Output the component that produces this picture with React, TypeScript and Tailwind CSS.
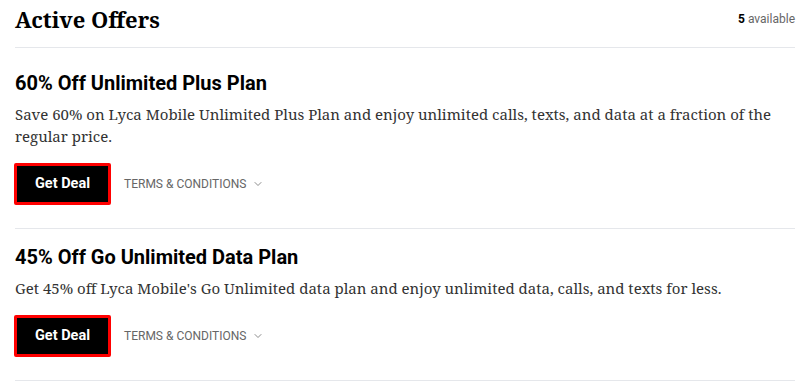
import { ChevronDown } from 'lucide-react';

interface Offer {
  id: number;
  title: string;
  description: string;
}

const offers: Offer[] = [
  {
    id: 1,
    title: '60% Off Unlimited Plus Plan',
    description:
      'Save 60% on Lyca Mobile Unlimited Plus Plan and enjoy unlimited calls, texts, and data at a fraction of the regular price.',
  },
  {
    id: 2,
    title: '45% Off Go Unlimited Data Plan',
    description:
      "Get 45% off Lyca Mobile's Go Unlimited data plan and enjoy unlimited data, calls, and texts for less.",
  },
];

const serif = "font-['Noto_Serif','DejaVu_Serif',serif]";

export default function App() {
  return (
    <div className="min-h-screen bg-white pl-[15px] pr-[9px]">
      <div className="flex items-center justify-between h-[48px] border-b border-gray-200 pb-[10px]">
        <h2 className={`${serif} text-[22px] font-bold text-black leading-none`}>Active Offers</h2>
        <p className="font-['Roboto',sans-serif] text-[12px] text-[#666]">
          <span className="font-bold text-black">5</span> available
        </p>
      </div>

      <div className="mt-[7px]">
        {offers.map((offer) => (
          <div key={offer.id} className="border-b border-gray-200 pt-[15px] pb-[23px]">
            <h3 className="font-['Roboto',sans-serif] text-[20px] font-bold text-black leading-[26px]">
              {offer.title}
            </h3>
            <p className={`${serif} mt-[7px] text-[15px] leading-[22px] text-[#333]`}>
              {offer.description}
            </p>
            <div className="mt-[16px] flex items-center gap-[13px]">
              <button className="-ml-px w-[97px] h-[42px] rounded-[2px] border-[3px] border-[#ff0000] bg-black font-['Roboto',sans-serif] text-[14.5px] font-bold text-white">
                Get Deal
              </button>
              <button className="flex items-center gap-[6px] font-['Roboto',sans-serif] text-[12px] text-[#666]">
                TERMS &amp; CONDITIONS
                <ChevronDown size={12} strokeWidth={1.5} />
              </button>
            </div>
          </div>
        ))}
      </div>
    </div>
  );
}
